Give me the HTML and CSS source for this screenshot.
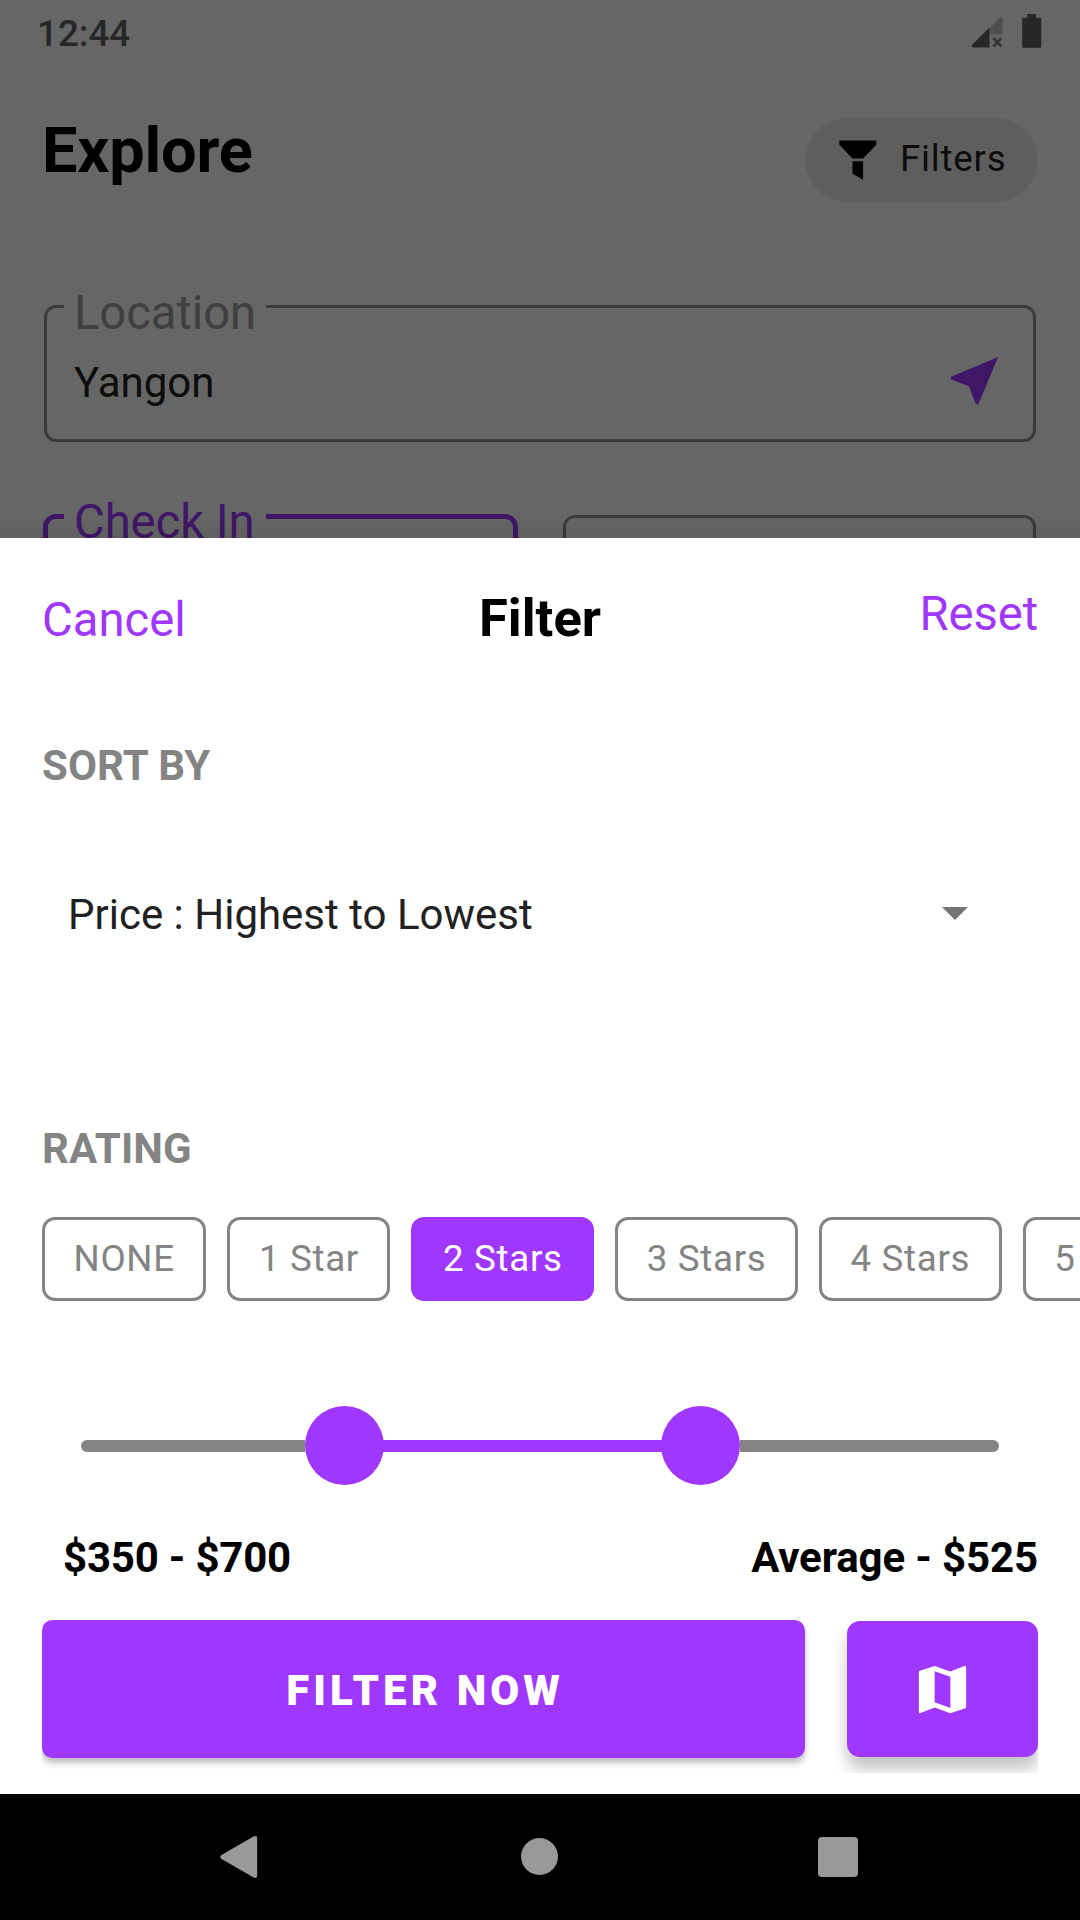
FILE: index.html
```html
<!DOCTYPE html>
<html lang="en">
<head>
<meta charset="utf-8">
<title>Explore</title>
<link rel="stylesheet" href="styles.css">
</head>
<body>
<div class="screen">
  <section class="explore">
    <div class="status">
      <span class="clock">12:44</span>
      <div class="status-icons">
        <svg class="signal" width="32" height="32" viewBox="0 0 32 32">
          <path fill="#c2c2c2" d="M18.500 12.500L29.500 1Q31.500 0 31.500 2V18.500H18.500z"/>
          <path fill="#626262" d="M18.500 11.500V31.500H2Q-.5 31 1 29z"/>
          <path stroke="#848484" stroke-width="2.600" d="M22.300 22l8 8.500M30.300 22l-8 8.500"/>
        </svg>
        <svg class="battery" width="20" height="34" viewBox="0 0 20 34">
          <path fill="#626262" d="M5.200 0h9v3.800H18q1.300 0 1.300 1.300v27.300q0 1.400-1.300 1.400H1.500Q.2 33.800.2 32.400V5.100q0-1.300 1.300-1.300h3.700z"/>
        </svg>
      </div>
    </div>
    <header class="header">
      <h1 class="title">Explore</h1>
      <div class="filter-chip">
        <svg width="38" height="40" viewBox="0 0 38 40">
          <path d="M.3.500h37v4.200L24 18.500H13.500L.3 4.700zM13.500 21.200h10.600v18.500l-10.600-6z"/>
        </svg>
        <span>Filters</span>
      </div>
    </header>
    <div class="field location">
      <span class="label">Location</span>
      <span class="value">Yangon</span>
      <svg width="63" height="63" viewBox="0 0 24 24"><path fill="#a037ff" d="M21 3L3 10.530v.98l6.840 2.650L12.480 21h.98L21 3z"/></svg>
    </div>
    <div class="dates">
      <div class="field active"><span class="label">Check In</span></div>
      <div class="field"></div>
    </div>
  </section>

  <section class="sheet">
    <div class="sheet-head">
      <span class="link cancel">Cancel</span>
      <h2 class="sheet-title">Filter</h2>
      <span class="link reset">Reset</span>
    </div>
    <h3 class="section-title">SORT BY</h3>
    <div class="select">
      <span>Price : Highest to Lowest</span>
      <svg width="26" height="13" viewBox="0 0 26 13"><path fill="#757575" d="M0 0h26L13 13z"/></svg>
    </div>
    <h3 class="section-title rating">RATING</h3>
    <div class="chips">
      <span class="chip">NONE</span>
      <span class="chip">1 Star</span>
      <span class="chip selected">2 Stars</span>
      <span class="chip">3 Stars</span>
      <span class="chip">4 Stars</span>
      <span class="chip">5 Stars</span>
    </div>
    <div class="slider">
      <div class="track"></div>
      <div class="thumb"></div>
      <div class="track on"></div>
      <div class="thumb"></div>
      <div class="track"></div>
    </div>
    <div class="prices">
      <span>$350 - $700</span>
      <span class="average">Average - $525</span>
    </div>
    <div class="actions">
      <div class="apply-wrap"><div class="apply">FILTER NOW</div></div>
      <div class="map-wrap">
        <div class="map">
          <svg width="63" height="63" viewBox="0 0 24 24"><path fill="#fff" d="M20.500 3l-.16.030L15 5.100 9 3 3.360 4.900c-.21.070-.36.250-.36.480V20.500c0 .28.220.5.500.5l.16-.03L9 18.900l6 2.100 5.640-1.900c.21-.07.360-.25.360-.48V3.500c0-.28-.22-.5-.5-.5zM15 19l-6-2.110V5l6 2.110V19z"/></svg>
        </div>
      </div>
    </div>
  </section>

  <nav class="navbar">
    <svg width="38" height="42" viewBox="0 0 38 42"><path fill="#999" d="M33 .7Q37.200-1.200 37.200 2.500v37q0 3.500-4 1.800L1.500 23Q-1 21 1.500 19z"/></svg>
    <div class="home"></div>
    <div class="recents"></div>
  </nav>
</div>
</body>
</html>
```
FILE: styles.css
```css
* { box-sizing: border-box; }
body { margin: 0; font-family: Roboto, sans-serif; background: #fff; }
h1, h2, h3 { margin: 0; }
svg { display: block; }

.screen {
  width: 1080px;
  height: 1920px;
  display: flex;
  flex-direction: column;
  overflow: hidden;
}

/* Page behind the sheet, dimmed by a scrim */
.explore {
  position: relative;
  height: 538px;
  flex: none;
  overflow: hidden;
}
.explore::after {
  content: "";
  position: absolute;
  inset: 0;
  background: linear-gradient(to top, rgba(0, 0, 0, .07), rgba(0, 0, 0, 0) 24px), rgba(0, 0, 0, .6);
}
.status {
  height: 63px;
  display: flex;
  justify-content: space-between;
  padding: 0 38px 0 37px;
}
.clock {
  font-size: 36.750px;
  font-weight: 500;
  line-height: 67px;
  color: #626262;
}
.status-icons { display: flex; gap: 19px; padding-top: 14px; }
.signal { margin-top: 2px; }

.header {
  display: flex;
  justify-content: space-between;
  padding: 50px 42px 0;
}
.title { font-size: 63px; line-height: 75px; font-weight: 700; letter-spacing: -.15px; color: #000; }
.filter-chip {
  width: 233px;
  height: 84px;
  margin-top: 5px;
  padding-left: 34px;
  display: flex;
  align-items: center;
  gap: 23px;
  border-radius: 42px;
  background: #ebebeb;
  font-size: 36.750px;
  line-height: 42px;
  letter-spacing: .75px;
  color: #212121;
}
.filter-chip span { padding-bottom: 2px; }

.field {
  position: relative;
  height: 137px;
  border: 3px solid #949494;
  border-radius: 12px;
}
.label {
  position: absolute;
  left: 17px;
  top: -22px;
  width: 202px;
  padding-left: 10px;
  font-size: 47.250px;
  line-height: 55px;
  letter-spacing: -.1px;
  background: #fff;
  color: #9e9e9e;
  white-space: nowrap;
}
.location {
  margin: 103px 44px 0;
  display: flex;
  justify-content: space-between;
  align-items: center;
  padding: 14px 27px 0 27px;
  font-size: 42px;
  color: #212121;
}
.value { padding-top: 4px; }
.dates {
  display: grid;
  grid-template-columns: 475px 473px;
  gap: 45px;
  align-items: center;
  padding: 72px 44px 0 43px;
}
.field.active { height: 139px; border: 5px solid #a037ff; border-radius: 13px; }
.active .label { left: 16px; top: -24px; color: #a037ff; }

/* Filter sheet */
.sheet { flex: none; height: 1256px; background: #fff; overflow: hidden; }
.sheet-head {
  display: grid;
  grid-template-columns: 1fr auto 1fr;
  align-items: baseline;
  padding: 48px 42px 0;
}
.link { font-size: 47.250px; line-height: 56px; color: #a037ff; }
.reset { text-align: right; align-self: start; letter-spacing: -.1px; }
.sheet-title { font-size: 52.500px; line-height: 64px; font-weight: 700; }
.section-title {
  margin: 91px 42px 0;
  font-size: 42px;
  line-height: 50px;
  font-weight: 700;
  letter-spacing: .1px;
  color: #848484;
}
.select {
  display: flex;
  align-items: center;
  justify-content: space-between;
  margin: 99px 112px 0 68px;
  font-size: 42px;
  line-height: 50px;
  color: #212121;
}
.select svg { margin-bottom: 3px; }
.section-title.rating { margin-top: 184px; }
.chips { display: flex; gap: 21px; margin: 43px 0 0 42px; }
.chip {
  flex: none;
  height: 84px;
  padding: 0 28.550px;
  border: 3px solid #848484;
  border-radius: 13px;
  font-size: 36.750px;
  line-height: 77px;
  letter-spacing: .66px;
  color: #848484;
}
.chip.selected { background: #a037ff; border-color: #a037ff; color: #fff; }

.slider { display: flex; align-items: center; margin: 105px 81px 0; height: 79px; }
.track { height: 12px; flex: 223.500 0 0; background: #848484; border-radius: 6px 0 0 6px; }
.track.on { flex-grow: 278; background: #a037ff; border-radius: 0; margin: 0 -1px; }
.track:last-child { flex-grow: 258.500; border-radius: 0 6px 6px 0; }
.thumb { width: 79px; height: 79px; border-radius: 50%; background: #a037ff; }
.prices {
  display: flex;
  justify-content: space-between;
  margin: 48px 42px 0 63px;
  font-size: 42px;
  line-height: 50px;
  font-weight: 700;
  letter-spacing: -.2px;
}
.average { letter-spacing: -.12px; }
.actions { display: flex; padding: 37px 42px 0; }
.apply-wrap { overflow: hidden; width: 784px; height: 158px; }
.apply {
  width: 763px;
  height: 138px;
  padding-left: 3px;
  border-radius: 10.500px;
  background: #a037ff;
  color: #fff;
  font-size: 42px;
  font-weight: 900;
  line-height: 141px;
  letter-spacing: 4.050px;
  text-align: center;
  box-shadow: 0 5px 6px rgba(0, 0, 0, .26);
}
.map-wrap { overflow: hidden; width: 212px; height: 153px; padding: 1px 0 0 21px; }
.map {
  width: 191px;
  height: 136px;
  display: flex;
  align-items: center;
  justify-content: center;
  border-radius: 13px;
  background: #a037ff;
  box-shadow: 0 12px 16px rgba(0, 0, 0, .24);
}

/* System navigation */
.navbar {
  flex: none;
  height: 126px;
  background: #000;
  display: flex;
  align-items: center;
  padding-left: 220px;
}
.home { width: 37px; height: 37px; border-radius: 50%; background: #999; margin: 0 0 1px 263px; }
.recents { width: 40px; height: 40px; border-radius: 4px; background: #999; margin-left: 260px; }
```
